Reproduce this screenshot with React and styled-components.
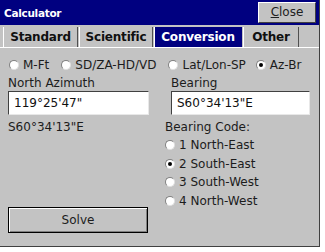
import React from "react";
import styled, { createGlobalStyle } from "styled-components";

const Global = createGlobalStyle`
  html, body { margin: 0; padding: 0; background: #ffffff; }
  body { font-family: "DejaVu Sans", Tahoma, sans-serif; }
`;

const Window = styled.div`
  width: 320px;
  height: 247px;
  background: #c3c3c3;
  display: flex;
  flex-direction: column;
  box-sizing: border-box;
  border-right: 1px solid #404040;
  border-bottom: 1px solid #404040;
`;

const TitleBar = styled.div`
  height: 25px;
  background: #000080;
  display: flex;
  align-items: center;
  justify-content: space-between;
  padding-left: 4px;
  padding-right: 3px;
`;

const Title = styled.span`
  color: #ffffff;
  font-family: "DejaVu Sans", sans-serif;
  font-weight: bold;
  font-size: 10.5px;
  letter-spacing: -0.3px;
`;

const CloseButton = styled.div`
  width: 58px;
  height: 21px;
  margin-top: -1px;
  box-sizing: border-box;
  background: #c3c3c3;
  border-top: 1px solid #ffffff;
  border-left: 1px solid #ffffff;
  border-right: 1px solid #404040;
  border-bottom: 1px solid #404040;
  display: flex;
  align-items: center;
  justify-content: center;
  font-size: 12px;
  color: #202020;
  u { text-decoration: underline; }
`;

const TabRow = styled.div`
  height: 22px;
  display: flex;
  align-items: flex-end;
  padding-left: 3px;
  gap: 1px;
  border-bottom: 1px solid #ffffff;
`;

const Tab = styled.div`
  height: 20px;
  box-sizing: border-box;
  display: flex;
  align-items: center;
  justify-content: center;
  width: ${(p) => p.$w}px;
  font-weight: bold;
  font-size: 12px;
  letter-spacing: -0.2px;
  background: ${(p) => (p.$active ? "#000080" : "#c3c3c3")};
  color: ${(p) => (p.$active ? "#ffffff" : "#101010")};
  border-left: 1px solid #ffffff;
  border-right: 1px solid ${(p) => (p.$active ? "#000080" : "#505050")};
`;

const Panel = styled.div`
  flex: 1;
  display: flex;
  flex-direction: column;
  padding: 8px 8px 0 8px;
  font-size: 12px;
  color: #1c1c1c;
`;

const RadioRow = styled.div`
  display: flex;
  align-items: center;
  height: 18px;
  margin-left: 1px;
`;

const RadioItem = styled.label`
  display: flex;
  align-items: center;
  gap: 4px;
  margin-right: ${(p) => p.$mr || 0}px;
  white-space: nowrap;
  height: 18px;
`;

const RadioCircle = styled.span`
  width: 10px;
  height: 10px;
  border-radius: 50%;
  box-sizing: border-box;
  background: #ffffff;
  border: 1px solid #808080;
  border-right-color: #e0e0e0;
  border-bottom-color: #e0e0e0;
  display: flex;
  align-items: center;
  justify-content: center;
  &::after {
    content: "";
    width: 4px;
    height: 4px;
    border-radius: 50%;
    background: ${(p) => (p.$on ? "#000000" : "transparent")};
  }
`;

const Columns = styled.div`
  flex: 1;
  display: grid;
  grid-template-columns: 163px 1fr;
  margin-top: 1px;
`;

const Col = styled.div`
  display: flex;
  flex-direction: column;
`;

const Label = styled.div`
  height: 16px;
  line-height: 16px;
  margin-left: ${(p) => p.$ml || 0}px;
`;

const Input = styled.div`
  height: 24px;
  box-sizing: border-box;
  width: ${(p) => p.$w}px;
  background: #ffffff;
  border-top: 1px solid #404040;
  border-left: 1px solid #404040;
  border-right: 1px solid #e8e8e8;
  border-bottom: 1px solid #e8e8e8;
  display: flex;
  align-items: center;
  padding-left: 5px;
  font-size: 12px;
  color: #101010;
`;

const Result = styled.div`
  height: 16px;
  line-height: 16px;
  margin-top: 4px;
`;

const CodeLabel = styled.div`
  height: 16px;
  line-height: 16px;
  margin-top: 4px;
  margin-left: -6px;
`;

const CodeList = styled.div`
  display: flex;
  flex-direction: column;
  margin-left: -6px;
  margin-top: 1px;
`;

const CodeItem = styled(RadioItem)`
  height: 18.5px;
`;

const Spacer = styled.div`
  flex: 1;
`;

const SolveButton = styled.div`
  width: 140px;
  height: 26px;
  box-sizing: border-box;
  border: 1px solid #000000;
  box-shadow: inset 1px 1px 0 #ffffff, inset -1px -1px 0 #808080;
  display: flex;
  align-items: center;
  justify-content: center;
  font-size: 12px;
  margin-bottom: 13px;
`;

function Radio({ on, children, mr }) {
  return (
    <RadioItem $mr={mr}>
      <RadioCircle $on={on} />
      <span>{children}</span>
    </RadioItem>
  );
}

export default function App() {
  const codes = ["1 North-East", "2 South-East", "3 South-West", "4 North-West"];
  return (
    <>
      <Global />
      <Window>
        <TitleBar>
          <Title>Calculator</Title>
          <CloseButton>
            <span><u>C</u>lose</span>
          </CloseButton>
        </TitleBar>
        <TabRow>
          <Tab $w={75}>Standard</Tab>
          <Tab $w={74}>Scientific</Tab>
          <Tab $w={88} $active>Conversion</Tab>
          <Tab $w={56}>Other</Tab>
        </TabRow>
        <Panel>
          <RadioRow>
            <Radio mr={12}>M-Ft</Radio>
            <Radio mr={12}>SD/ZA-HD/VD</Radio>
            <Radio mr={10}>Lat/Lon-SP</Radio>
            <Radio on>Az-Br</Radio>
          </RadioRow>
          <Columns>
            <Col>
              <Label>North Azimuth</Label>
              <Input $w={141}>119°25'47"</Input>
              <Result>S60°34'13"E</Result>
              <Spacer />
              <SolveButton>Solve</SolveButton>
            </Col>
            <Col>
              <Label>Bearing</Label>
              <Input $w={139}>S60°34'13"E</Input>
              <CodeLabel>Bearing Code:</CodeLabel>
              <CodeList>
                {codes.map((c, i) => (
                  <CodeItem key={c}>
                    <RadioCircle $on={i === 1} />
                    <span>{c}</span>
                  </CodeItem>
                ))}
              </CodeList>
            </Col>
          </Columns>
        </Panel>
      </Window>
    </>
  );
}
